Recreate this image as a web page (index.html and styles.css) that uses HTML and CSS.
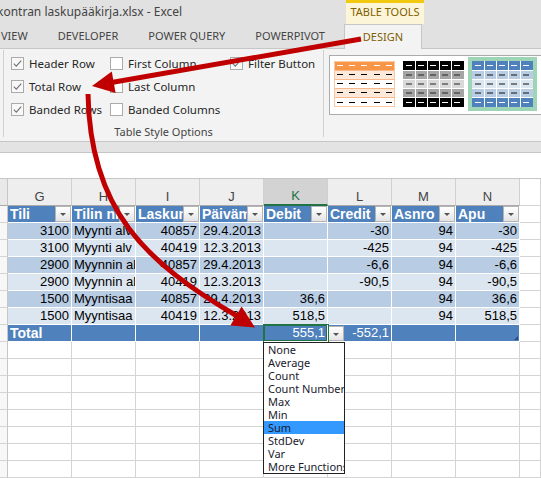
FILE: index.html
```html
<!DOCTYPE html>
<html lang="fi">
<head>
    <meta charset="UTF-8">
    <title>kontran laskupääkirja.xlsx - Excel</title>
    <link rel="stylesheet" href="styles.css">
</head>
<body>
<div class="app">
    <!-- Otsikkorivi -->
    <div class="titlebar">
        <div class="title">kontran laskupääkirja.xlsx - Excel</div>
        <div class="ctx-label">TABLE TOOLS</div>
    </div>

    <!-- Välilehdet -->
    <div class="tabs">
        <span class="tab tab-first">VIEW</span>
        <span class="tab">DEVELOPER</span>
        <span class="tab">POWER QUERY</span>
        <span class="tab">POWERPIVOT</span>
        <span class="tab tab-design">DESIGN</span>
    </div>

    <!-- Nauha -->
    <div class="ribbon">
        <div class="group">
            <div class="opts">
                <label class="opt"><span class="box checked"><svg width="11" height="11" viewBox="0 0 11 11"><path d="M1.8 5.6 L4.3 8.1 L9.2 2.6" fill="none" stroke="#707070" stroke-width="1.1"/></svg></span>Header Row</label>
                <label class="opt"><span class="box checked"><svg width="11" height="11" viewBox="0 0 11 11"><path d="M1.8 5.6 L4.3 8.1 L9.2 2.6" fill="none" stroke="#707070" stroke-width="1.1"/></svg></span>Total Row</label>
                <label class="opt"><span class="box checked"><svg width="11" height="11" viewBox="0 0 11 11"><path d="M1.8 5.6 L4.3 8.1 L9.2 2.6" fill="none" stroke="#707070" stroke-width="1.1"/></svg></span>Banded Rows</label>
                <label class="opt"><span class="box"></span>First Column</label>
                <label class="opt"><span class="box"></span>Last Column</label>
                <label class="opt"><span class="box"></span>Banded Columns</label>
                <label class="opt"><span class="box checked"><svg width="11" height="11" viewBox="0 0 11 11"><path d="M1.8 5.6 L4.3 8.1 L9.2 2.6" fill="none" stroke="#707070" stroke-width="1.1"/></svg></span>Filter Button</label>
            </div>
            <div class="group-label">Table Style Options</div>
        </div>

        <div class="gallery">
            <div class="thumb">
                <svg width="61" height="46" viewBox="0 0 61 46">
                    <rect x="0" y="0" width="61" height="46" fill="#fff"/>
                    <rect x="0" y="0" width="61" height="9" fill="#f79646"/>
                    <rect x="0" y="9" width="61" height="9" fill="#fde9d9"/>
                    <rect x="0" y="27" width="61" height="9" fill="#fde9d9"/>
                    <path d="M0 9.5 H61 M0 18.5 H61 M0 27.5 H61 M0 36.5 H61" stroke="#f8b88b" stroke-width="1"/>
                    <rect x="0.5" y="0.5" width="60" height="45" fill="none" stroke="#fac9a4"/>
                    <path d="M3 4.5 h6 M15 4.5 h6 M27 4.5 h6 M40 4.5 h6 M52 4.5 h6" stroke="#fff"/>
                    <path d="M3 13.5 h6 M15 13.5 h6 M27 13.5 h6 M40 13.5 h6 M52 13.5 h6 M3 22.5 h6 M15 22.5 h6 M27 22.5 h6 M40 22.5 h6 M52 22.5 h6 M3 31.5 h6 M15 31.5 h6 M27 31.5 h6 M40 31.5 h6 M52 31.5 h6 M3 41.5 h6 M15 41.5 h6 M27 41.5 h6 M40 41.5 h6 M52 41.5 h6" stroke="#000"/>
                </svg>
            </div>
            <div class="thumb">
                <svg width="61" height="46" viewBox="0 0 61 46">
                    <rect x="0" y="0" width="61" height="9" fill="#000"/>
                    <rect x="0" y="9" width="61" height="9" fill="#a5a5a5"/>
                    <rect x="0" y="18" width="61" height="9" fill="#d9d9d9"/>
                    <rect x="0" y="27" width="61" height="9" fill="#a5a5a5"/>
                    <rect x="0" y="36" width="61" height="10" fill="#000"/>
                    <path d="M0 9.5 H61 M0 18.5 H61 M0 27.5 H61 M0 36.5 H61 M12.5 0 V46 M24.5 0 V46 M36.5 0 V46 M48.5 0 V46" stroke="#fff"/>
                    <path d="M3 4.5 h6 M15 4.5 h6 M27 4.5 h6 M39 4.5 h6 M51 4.5 h6 M3 41.5 h6 M15 41.5 h6 M27 41.5 h6 M39 41.5 h6 M51 41.5 h6" stroke="#fff"/>
                    <path d="M3 14 h6 M15 14 h6 M27 14 h6 M39 14 h6 M51 14 h6 M3 23 h6 M15 23 h6 M27 23 h6 M39 23 h6 M51 23 h6 M3 32 h6 M15 32 h6 M27 32 h6 M39 32 h6 M51 32 h6" stroke="#222"/>
                </svg>
            </div>
            <div class="thumb selected">
                <svg width="61" height="46" viewBox="0 0 61 46">
                    <rect x="0" y="0" width="61" height="9" fill="#4f81bd"/>
                    <rect x="0" y="9" width="61" height="9" fill="#b8cce4"/>
                    <rect x="0" y="18" width="61" height="9" fill="#dce6f1"/>
                    <rect x="0" y="27" width="61" height="9" fill="#b8cce4"/>
                    <rect x="0" y="36" width="61" height="10" fill="#4f81bd"/>
                    <path d="M0 9.5 H61 M0 18.5 H61 M0 27.5 H61 M0 36.5 H61 M12.5 0 V46 M24.5 0 V46 M36.5 0 V46 M48.5 0 V46" stroke="#fff"/>
                    <path d="M3 4.5 h6 M15 4.5 h6 M27 4.5 h6 M39 4.5 h6 M51 4.5 h6 M3 41.5 h6 M15 41.5 h6 M27 41.5 h6 M39 41.5 h6 M51 41.5 h6" stroke="#fff"/>
                    <path d="M3 14 h6 M15 14 h6 M27 14 h6 M39 14 h6 M51 14 h6 M3 23 h6 M15 23 h6 M27 23 h6 M39 23 h6 M51 23 h6 M3 32 h6 M15 32 h6 M27 32 h6 M39 32 h6 M51 32 h6" stroke="#111"/>
                </svg>
            </div>
        </div>
    </div>

    <div class="subbar"></div>
    <div class="formula"></div>

    <!-- Taulukko -->
    <div class="sheet">
        <div class="row colhdr">
            <div class="rh"></div>
            <div class="c ch">G</div><div class="c ch">H</div><div class="c ch">I</div><div class="c ch">J</div>
            <div class="c ch active">K</div><div class="c ch">L</div><div class="c ch">M</div><div class="c ch">N</div>
            <div class="c ch rest"></div>
        </div>

        <div class="row hdr">
            <div class="rh"></div>
            <div class="c hc"><span>Tili</span><i class="fb"></i></div>
            <div class="c hc"><span>Tilin nimi</span><i class="fb"></i></div>
            <div class="c hc"><span>Laskunumero</span><i class="fb"></i></div>
            <div class="c hc"><span>Päivämäärä</span><i class="fb"></i></div>
            <div class="c hc"><span>Debit</span><i class="fb"></i></div>
            <div class="c hc"><span>Credit</span><i class="fb"></i></div>
            <div class="c hc"><span>Asnro</span><i class="fb"></i></div>
            <div class="c hc"><span>Apu</span><i class="fb"></i></div>
            <div class="c rest"></div>
        </div>

        <div class="row b1">
            <div class="rh"></div>
            <div class="c num">3100</div><div class="c">Myynti alv</div><div class="c num">40857</div><div class="c num">29.4.2013</div>
            <div class="c num"></div><div class="c num">-30</div><div class="c num">94</div><div class="c num">-30</div>
            <div class="c rest"></div>
        </div>
        <div class="row b2">
            <div class="rh"></div>
            <div class="c num">3100</div><div class="c">Myynti alv</div><div class="c num">40419</div><div class="c num">12.3.2013</div>
            <div class="c num"></div><div class="c num">-425</div><div class="c num">94</div><div class="c num">-425</div>
            <div class="c rest"></div>
        </div>
        <div class="row b1">
            <div class="rh"></div>
            <div class="c num">2900</div><div class="c">Myynnin al</div><div class="c num">40857</div><div class="c num">29.4.2013</div>
            <div class="c num"></div><div class="c num">-6,6</div><div class="c num">94</div><div class="c num">-6,6</div>
            <div class="c rest"></div>
        </div>
        <div class="row b2">
            <div class="rh"></div>
            <div class="c num">2900</div><div class="c">Myynnin al</div><div class="c num">40419</div><div class="c num">12.3.2013</div>
            <div class="c num"></div><div class="c num">-90,5</div><div class="c num">94</div><div class="c num">-90,5</div>
            <div class="c rest"></div>
        </div>
        <div class="row b1">
            <div class="rh"></div>
            <div class="c num">1500</div><div class="c">Myyntisaa</div><div class="c num">40857</div><div class="c num">29.4.2013</div>
            <div class="c num">36,6</div><div class="c num"></div><div class="c num">94</div><div class="c num">36,6</div>
            <div class="c rest"></div>
        </div>
        <div class="row b2">
            <div class="rh"></div>
            <div class="c num">1500</div><div class="c">Myyntisaa</div><div class="c num">40419</div><div class="c num">12.3.2013</div>
            <div class="c num">518,5</div><div class="c num"></div><div class="c num">94</div><div class="c num">518,5</div>
            <div class="c rest"></div>
        </div>

        <div class="row tot">
            <div class="rh"></div>
            <div class="c total-label">Total</div>
            <div class="c"></div><div class="c"></div><div class="c"></div>
            <div class="c num sel">555,1
                <ul class="fn-list">
                    <li>None</li>
                    <li>Average</li>
                    <li>Count</li>
                    <li>Count Number</li>
                    <li>Max</li>
                    <li>Min</li>
                    <li class="hl">Sum</li>
                    <li>StdDev</li>
                    <li>Var</li>
                    <li>More Functions...</li>
                </ul>
            </div>
            <div class="c tot-l"><i class="fb"></i><span>-552,1</span></div>
            <div class="c"></div>
            <div class="c corner"></div>
            <div class="c rest"></div>
        </div>

        <div class="row"><div class="rh"></div><div class="c"></div><div class="c"></div><div class="c"></div><div class="c"></div><div class="c"></div><div class="c"></div><div class="c"></div><div class="c"></div><div class="c rest"></div></div>
        <div class="row"><div class="rh"></div><div class="c"></div><div class="c"></div><div class="c"></div><div class="c"></div><div class="c"></div><div class="c"></div><div class="c"></div><div class="c"></div><div class="c rest"></div></div>
        <div class="row"><div class="rh"></div><div class="c"></div><div class="c"></div><div class="c"></div><div class="c"></div><div class="c"></div><div class="c"></div><div class="c"></div><div class="c"></div><div class="c rest"></div></div>
        <div class="row"><div class="rh"></div><div class="c"></div><div class="c"></div><div class="c"></div><div class="c"></div><div class="c"></div><div class="c"></div><div class="c"></div><div class="c"></div><div class="c rest"></div></div>
        <div class="row"><div class="rh"></div><div class="c"></div><div class="c"></div><div class="c"></div><div class="c"></div><div class="c"></div><div class="c"></div><div class="c"></div><div class="c"></div><div class="c rest"></div></div>
        <div class="row"><div class="rh"></div><div class="c"></div><div class="c"></div><div class="c"></div><div class="c"></div><div class="c"></div><div class="c"></div><div class="c"></div><div class="c"></div><div class="c rest"></div></div>
        <div class="row"><div class="rh"></div><div class="c"></div><div class="c"></div><div class="c"></div><div class="c"></div><div class="c"></div><div class="c"></div><div class="c"></div><div class="c"></div><div class="c rest"></div></div>
        <div class="row"><div class="rh"></div><div class="c"></div><div class="c"></div><div class="c"></div><div class="c"></div><div class="c"></div><div class="c"></div><div class="c"></div><div class="c"></div><div class="c rest"></div></div>
        <div class="row"><div class="rh"></div><div class="c"></div><div class="c"></div><div class="c"></div><div class="c"></div><div class="c"></div><div class="c"></div><div class="c"></div><div class="c"></div><div class="c rest"></div></div>
    </div>

    <!-- Nuolet -->
    <svg class="arrows" width="541" height="478" viewBox="0 0 541 478">
        <path d="M361 39 L113 82.3" stroke="#c00000" stroke-width="5" fill="none"/>
        <polygon points="92,86 111.8,71.4 115.6,93" fill="#c00000"/>
        <path d="M88 94 C90 210, 145 262, 237 316" stroke="#c00000" stroke-width="5" fill="none"/>
        <polygon points="255,327.5 230.4,325.5 241.6,306.5" fill="#c00000"/>
    </svg>
</div>
</body>
</html>
```

FILE: styles.css
```css
/* Perusasetukset */
body {
    margin: 0;
    background: #fff;
    font-family: "Noto Sans", "Open Sans", sans-serif;
    overflow: hidden;
}

.app {
    position: relative;
    width: 541px;
    height: 478px;
    overflow: hidden;
}

/* Otsikkorivi */
.titlebar {
    display: flex;
    height: 24px;
    background: #e1e1e1;
}

.title {
    flex: 0 0 349px;
    margin-left: -3px;
    font-size: 12px;
    line-height: 24px;
    color: #444;
    white-space: nowrap;
    overflow: hidden;
}

.ctx-label {
    flex: 0 0 78px;
    box-sizing: border-box;
    height: 24px;
    border-top: 3px solid #f2c811;
    background: #fdf5d8;
    color: #7f6000;
    font-size: 11px;
    line-height: 18px;
    text-align: center;
}

/* Välilehdet */
.tabs {
    display: flex;
    height: 24px;
    background: #e1e1e1;
    border-bottom: 1px solid #c6c6c6;
    font-size: 11px;
    color: #444;
}

.tab {
    padding: 0 15px;
    line-height: 24px;
    white-space: nowrap;
}

.tab-first {
    margin-left: -14px;
}

.tab-design {
    flex: 0 0 78px;
    box-sizing: border-box;
    height: 25px;
    margin-left: 4px;
    margin-bottom: -1px;
    padding: 0;
    border: 1px solid #c6c6c6;
    border-bottom: none;
    background: #f3f3f3;
    color: #7f6000;
    text-align: center;
    line-height: 23px;
}

/* Nauha */
.ribbon {
    display: flex;
    height: 93px;
    box-sizing: border-box;
    background: #f3f3f3;
    border-bottom: 1px solid #c6c6c6;
}

.group {
    flex: 0 0 321px;
    box-sizing: border-box;
    margin: 1px 0 4px 3px;
    border-left: 1px solid #d0d0d0;
    border-right: 1px solid #d0d0d0;
}

.opts {
    display: grid;
    grid-auto-flow: column;
    grid-template-rows: repeat(3, 23px);
    grid-template-columns: 99px 120px auto;
    padding: 2px 0 0 7px;
}

.opt {
    display: flex;
    align-items: center;
    gap: 5px;
    font-size: 11.5px;
    color: #262626;
    white-space: nowrap;
}

.box {
    display: flex;
    align-items: center;
    justify-content: center;
    width: 13px;
    height: 13px;
    box-sizing: border-box;
    border: 1px solid #ababab;
    background: #fff;
}

.box.checked {
    background: #f8f8f8;
}

.group-label {
    margin-top: 4px;
    font-size: 11px;
    line-height: 14px;
    color: #444;
    text-align: center;
}

.gallery {
    display: flex;
    flex: 0 0 240px;
    height: 60px;
    box-sizing: border-box;
    margin: 6px 0 0 5px;
    padding: 1px 0 0 0;
    border: 1px solid #ababab;
    background: #fff;
}

.thumb {
    padding: 4px;
    height: 46px;
}

.thumb svg {
    display: block;
}

.thumb.selected {
    background: #9fd5b7;
}

/* Ribbonin alapuoli */
.subbar {
    height: 11px;
    box-sizing: border-box;
    background: #e3e3e3;
    border-bottom: 1px solid #c6c6c6;
}

.formula {
    height: 26px;
    box-sizing: border-box;
    background: #fff;
    border-bottom: 1px solid #c6c6c6;
}

/* Taulukko */
.row {
    display: flex;
    height: 17px;
}

.rh {
    flex: 0 0 8px;
    box-sizing: border-box;
    background: #f7f7f7;
    border-right: 1px solid #c6c6c6;
    border-bottom: 1px solid #d4d4d4;
}

.c {
    flex: 0 0 64px;
    box-sizing: border-box;
    padding: 0 2px;
    border-right: 1px solid #d4d4d4;
    border-bottom: 1px solid #d4d4d4;
    font-family: "Liberation Sans", Arial, sans-serif;
    font-size: 13px;
    line-height: 16px;
    color: #000;
    white-space: nowrap;
    overflow: hidden;
}

.c.rest {
    flex: 1 1 auto;
}

.num {
    text-align: right;
}

/* Sarakeotsikot */
.colhdr {
    height: 27px;
}

.colhdr .rh {
    background: #e9e9e9;
    border-bottom: 1px solid #ababab;
}

.ch {
    padding-top: 10px;
    background: #eeeeee;
    border-right-color: #d0d0d0;
    border-bottom: 1px solid #ababab;
    color: #444;
    text-align: center;
}

.ch.active {
    background: #d3d3d3;
    color: #217346;
    border-bottom: 2px solid #217346;
    padding-top: 9px;
}

/* Taulukon rivit */
.hdr .c, .tot .c {
    background: #4f81bd;
    color: #fff;
    border-color: #fff;
}

.b1 .c {
    background: #b8cce4;
    border-color: #fff;
}

.b2 .c {
    background: #dce6f1;
    border-color: #fff;
}

.row .c.rest {
    background: #fff;
    border-color: #d4d4d4;
}

.hc {
    display: flex;
    padding: 0 0 0 2px;
}

.hc span {
    flex: 1;
    overflow: hidden;
    font-weight: bold;
    font-size: 14px;
}

.total-label {
    font-weight: bold;
    font-size: 14px;
}

/* Suodatinpainike */
.fb {
    display: flex;
    align-items: center;
    justify-content: center;
    flex: 0 0 16px;
    height: 16px;
    box-sizing: border-box;
    border: 1px solid #b4b4b4;
    background: linear-gradient(#ffffff, #e4e4e4);
}

.fb::after {
    content: "";
    margin-top: 1px;
    border-left: 3px solid transparent;
    border-right: 3px solid transparent;
    border-top: 3px solid #555;
}

.tot-l {
    display: flex;
    padding-left: 0;
}

.tot-l .fb {
    height: 15px;
    margin-top: 1px;
}

.tot-l span {
    flex: 1;
    text-align: right;
}

/* Valittu solu ja funktiolista */
.tot .c.sel {
    position: relative;
    z-index: 2;
    overflow: visible;
    box-shadow: 0 0 0 1px #217346, inset 0 0 0 1px #217346;
}

.fn-list {
    position: absolute;
    top: 17px;
    left: -1px;
    width: 82px;
    height: 132px;
    box-sizing: border-box;
    margin: 0;
    padding: 0;
    list-style: none;
    border: 1px solid #222;
    background: #fff;
    text-align: left;
    overflow: hidden;
}

.fn-list li {
    height: 13px;
    padding-left: 4px;
    font-family: "Noto Sans", "Open Sans", sans-serif;
    font-size: 11px;
    line-height: 13px;
    color: #1a1a2e;
    white-space: nowrap;
}

.fn-list li.hl {
    background: #3399ff;
}

.corner {
    position: relative;
}

.corner::after {
    content: "";
    position: absolute;
    right: 1px;
    bottom: 1px;
    border-left: 4px solid transparent;
    border-bottom: 4px solid #2b4c8c;
}

/* Nuolet */
.arrows {
    position: absolute;
    top: 0;
    left: 0;
    z-index: 10;
    pointer-events: none;
}
```
